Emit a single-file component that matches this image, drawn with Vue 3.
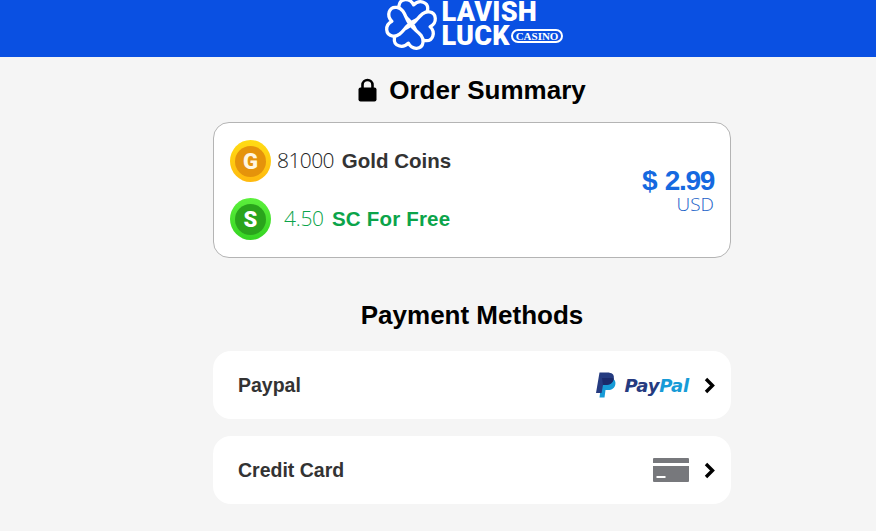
<script setup>
const coins = [
  { key: 'gold', letter: 'G', amount: '81000', label: 'Gold Coins' },
  { key: 'sweep', letter: 'S', amount: '4.50', label: 'SC For Free' },
]
const leafAngles = [8, 98, 188, 278]
</script>

<template>
  <div class="page">
    <header class="topbar">
      <div class="logo">
        <svg class="clover" width="54" height="54" viewBox="-28 -28 56 56">
          <g v-for="angle in leafAngles" :key="angle" :transform="`rotate(${angle})`">
            <path
              d="M0 -1C-3 -6-15-8-15-17C-15-25-5-27 0-20C5-27 15-25 15-17C15-8 3-6 0-1Z"
              fill="#0a50e2"
              stroke="#fff"
              stroke-width="3.4"
              stroke-linejoin="round"
            />
          </g>
        </svg>
        <div class="wordmark">
          <span class="word">LAVISH</span>
          <div class="luck-line">
            <span class="word">LUCK</span>
            <span class="casino">CASINO</span>
          </div>
        </div>
      </div>
    </header>

    <main class="checkout">
      <h1 class="section-title">
        <svg class="lock" width="19" height="24" viewBox="0 0 19 24">
          <path d="M4.500 10V7a5 5 0 0 1 10 0v3" fill="none" stroke="#000" stroke-width="2.600" />
          <rect x="0.500" y="9.500" width="18" height="14" rx="2" fill="#000" />
        </svg>
        Order Summary
      </h1>

      <section class="summary-card">
        <div class="coin-list">
          <div v-for="coin in coins" :key="coin.key" class="coin-row" :class="coin.key">
            <span class="coin"><span class="coin-face">{{ coin.letter }}</span></span>
            <span class="coin-text">{{ coin.amount }} <strong>{{ coin.label }}</strong></span>
          </div>
        </div>
        <div class="price">
          <strong>$ 2.99</strong>
          <span>USD</span>
        </div>
      </section>

      <h2 class="section-title methods-title">Payment Methods</h2>

      <button class="method">
        <span class="method-name">Paypal</span>
        <span class="method-right">
          <span class="paypal">
            <svg width="21" height="26" viewBox="0 0 21 26">
              <path d="M6 6h7c4 0 7 2 6.400 6-.6 4-3.400 6-7.400 6H9.500L8.500 25.500H3.500Z" fill="#179bd7" />
              <path d="M3.500 0.500H11c5 0 7.500 2 6.800 6-.7 4.500-3.800 6.500-8 6.500H7L5.600 21H0Z" fill="#253b80" />
              <path d="M6 6h8.500c1.500 0 2.700.2 3.400.6-.8 4.200-3.800 6.400-8 6.400H7Z" fill="#1b2a6b" />
            </svg>
            <span class="paypal-word"><span class="pay">Pay</span><span class="pal">Pal</span></span>
          </span>
          <svg class="chevron" width="11" height="17" viewBox="0 0 11 17">
            <path d="M2 2l6.500 6.500L2 15" fill="none" stroke="#000" stroke-width="3.400" />
          </svg>
        </span>
      </button>

      <button class="method">
        <span class="method-name">Credit Card</span>
        <span class="method-right">
          <svg width="36" height="24" viewBox="0 0 36 24">
            <path d="M1 0h34a1 1 0 0 1 1 1v4H0V1a1 1 0 0 1 1-1Z" fill="#77787c" />
            <path d="M0 8h36v15a1 1 0 0 1-1 1H1a1 1 0 0 1-1-1Z" fill="#77787c" />
            <rect x="3.500" y="18" width="9" height="2" fill="#fff" />
          </svg>
          <svg class="chevron" width="11" height="17" viewBox="0 0 11 17">
            <path d="M2 2l6.500 6.500L2 15" fill="none" stroke="#000" stroke-width="3.400" />
          </svg>
        </span>
      </button>
    </main>
  </div>
</template>

<style>
body {
  background: #f5f5f5;
}
</style>

<style scoped>
.page {
  height: 531px;
  overflow: hidden;
  font-family: "Liberation Sans", Arial, sans-serif;
  background: #f5f5f5;
}

.topbar {
  height: 57px;
  padding-left: 71px;
  background: #0a50e2;
  display: flex;
  justify-content: center;
  overflow: hidden;
}

.logo {
  display: flex;
  align-items: flex-start;
  gap: 4px;
  height: 57px;
  color: #fff;
}

.clover {
  margin-top: -3px;
  flex: none;
}

.wordmark {
  display: flex;
  flex-direction: column;
}

.word {
  font-family: Roboto, sans-serif;
  font-weight: 900;
  font-size: 27px;
  line-height: 24px;
  letter-spacing: 0.2px;
}

.luck-line {
  display: flex;
  align-items: center;
}

.casino {
  margin-left: 1px;
  padding: 0 3px;
  border: 2px solid #fff;
  border-radius: 8px;
  background: #0a50e2;
  font-family: "Liberation Serif", serif;
  font-weight: 700;
  font-size: 11px;
  line-height: 10px;
}

.checkout {
  width: 518px;
  margin-left: 213px;
  display: flex;
  flex-direction: column;
}

.section-title {
  margin: 17px 0 0;
  height: 32px;
  display: flex;
  justify-content: center;
  align-items: center;
  gap: 12px;
  font-size: 26px;
  font-weight: 700;
  color: #000;
}

.lock {
  flex: none;
}

.summary-card {
  margin-top: 16px;
  height: 136px;
  box-sizing: border-box;
  padding: 0 16px;
  display: flex;
  justify-content: space-between;
  align-items: center;
  background: #fff;
  border: 1px solid #b4b4b4;
  border-radius: 16px;
}

.coin-list {
  display: flex;
  flex-direction: column;
  gap: 16px;
}

.coin-row {
  display: flex;
  align-items: center;
  gap: 6px;
  height: 42px;
}

.coin {
  width: 41px;
  height: 42px;
  border-radius: 50%;
  display: flex;
  align-items: center;
  justify-content: center;
}

.coin-face {
  width: 31px;
  height: 31px;
  border-radius: 50%;
  display: flex;
  align-items: center;
  justify-content: center;
  font-family: Roboto, sans-serif;
  font-size: 22px;
  font-weight: 900;
  color: #fff6e0;
}

.gold .coin {
  background: linear-gradient(#ffdc14, #ffb90f);
}

.gold .coin-face {
  background: #e5930b;
}

.sweep .coin {
  background: linear-gradient(#5cf03c, #35d422);
}

.sweep .coin-face {
  background: #2aa41c;
  color: #fff;
}

.coin-text {
  margin-top: -2px;
  font-family: "Open Sans", sans-serif;
  font-weight: 300;
  font-size: 21px;
  letter-spacing: -0.6px;
  color: #222;
}

.coin-text strong {
  margin-left: 3px;
  font-family: "Liberation Sans", Arial, sans-serif;
  font-weight: 700;
  font-size: 20.500px;
  letter-spacing: 0;
  color: #333;
}

.sweep .coin-text {
  margin-left: 7px;
  letter-spacing: -0.300px;
  color: #0ba44a;
}

.sweep .coin-text strong {
  letter-spacing: 0.200px;
  color: #0ba44a;
}

.price {
  display: flex;
  flex-direction: column;
  align-items: flex-end;
  color: #1569e0;
}

.price strong {
  font-size: 28px;
  line-height: 32px;
  letter-spacing: -1.300px;
  word-spacing: 2px;
}

.price span {
  margin-top: -5px;
  font-family: "Open Sans", sans-serif;
  font-weight: 300;
  font-size: 19px;
  line-height: 24px;
  color: #1a62c8;
}

.methods-title {
  margin-top: 41px;
}

.method {
  margin-top: 20px;
  height: 68px;
  padding: 0 16px 0 25px;
  display: flex;
  justify-content: space-between;
  align-items: center;
  border: none;
  border-radius: 18px;
  background: #fff;
  font-family: inherit;
}

.method + .method {
  margin-top: 17px;
}

.method-name {
  font-size: 19.500px;
  font-weight: 700;
  color: #333;
}

.method-right {
  display: flex;
  align-items: center;
  gap: 15px;
}

.paypal {
  display: flex;
  align-items: center;
  gap: 7px;
}

.paypal-word {
  font-family: "DejaVu Sans", sans-serif;
  font-style: italic;
  font-weight: 700;
  font-size: 18px;
  letter-spacing: -0.200px;
}

.pay {
  color: #253b80;
}

.pal {
  color: #179bd7;
}

.chevron {
  flex: none;
}
</style>
